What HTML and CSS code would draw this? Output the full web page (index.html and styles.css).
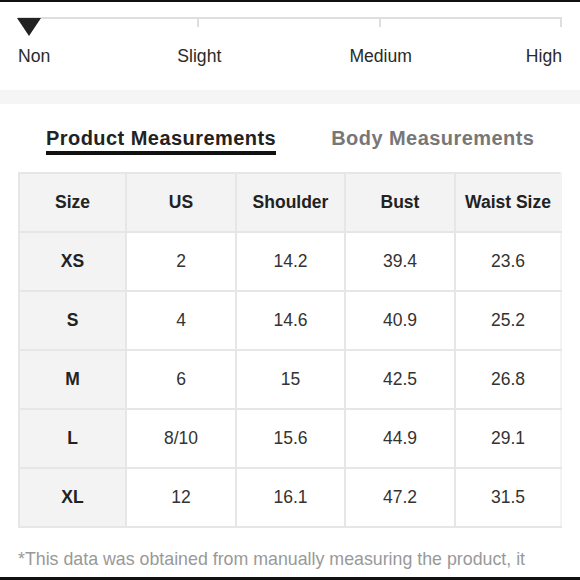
FILE: index.html
```html
<!DOCTYPE html>
<html>
<head>
<meta charset="utf-8">
<link rel="stylesheet" href="styles.css">
</head>
<body>
<section class="stretch">
  <div class="track">
    <span class="seg"></span><span class="seg"></span><span class="seg"></span>
    <span class="pointer"></span>
  </div>
  <div class="labels">
    <span class="lab lab-non">Non</span>
    <span class="lab lab-slight">Slight</span>
    <span class="lab lab-medium">Medium</span>
    <span class="lab lab-high">High</span>
  </div>
</section>
<div class="band"></div>
<nav class="tabs">
  <span class="tab active">Product Measurements</span>
  <span class="tab">Body Measurements</span>
</nav>
<table class="sizes">
  <colgroup>
    <col class="c-size"><col class="c-us"><col class="c-shoulder"><col class="c-bust"><col class="c-waist">
  </colgroup>
  <thead>
    <tr><th>Size</th><th>US</th><th>Shoulder</th><th>Bust</th><th>Waist Size</th></tr>
  </thead>
  <tbody>
    <tr><th>XS</th><td>2</td><td>14.2</td><td>39.4</td><td>23.6</td></tr>
    <tr><th>S</th><td>4</td><td>14.6</td><td>40.9</td><td>25.2</td></tr>
    <tr><th>M</th><td>6</td><td>15</td><td>42.5</td><td>26.8</td></tr>
    <tr><th>L</th><td>8/10</td><td>15.6</td><td>44.9</td><td>29.1</td></tr>
    <tr><th>XL</th><td>12</td><td>16.1</td><td>47.2</td><td>31.5</td></tr>
  </tbody>
</table>
<p class="note">*This data was obtained from manually measuring the product, it</p>
</body>
</html>
```
FILE: styles.css
```css
html, body {
  margin: 0;
  padding: 0;
}
body {
  width: 580px;
  height: 580px;
  box-sizing: border-box;
  overflow: hidden;
  background: #fff;
  border-top: 2px solid #111;
  border-bottom: 3px solid #111;
  font-family: "Liberation Sans", Arial, sans-serif;
  color: #333;
}
.stretch {
  padding: 15px 18px 0 18px;
}
.track {
  position: relative;
  display: grid;
  grid-template-columns: 1fr 1fr 1fr;
  height: 10px;
}
.seg {
  border-top: 2px solid #dedede;
  border-right: 2px solid #dedede;
}
.pointer {
  position: absolute;
  left: -1px;
  top: 1px;
  width: 0;
  height: 0;
  border-left: 12px solid transparent;
  border-right: 12px solid transparent;
  border-top: 18px solid #222;
}
.labels {
  display: grid;
  grid-template-columns: repeat(6, 1fr);
  margin-top: 19px;
  font-size: 17.6px;
  line-height: 20px;
  color: #2a2a2a;
}
.lab { white-space: nowrap; }
.lab-non { grid-column: 1; text-align: left; }
.lab-slight { grid-column: 2 / 4; text-align: center; }
.lab-medium { grid-column: 4 / 6; text-align: center; }
.lab-high { grid-column: 6; text-align: right; }
.band {
  height: 14px;
  margin-top: 24px;
  background: #f5f5f5;
}
.tabs {
  display: flex;
  gap: 55px;
  padding: 22px 0 0 46px;
}
.tab {
  font-size: 20px;
  line-height: 24px;
  font-weight: bold;
  letter-spacing: 0.45px;
  color: #777;
  padding-bottom: 1px;
  border-bottom: 4px solid transparent;
  white-space: nowrap;
}
.tab.active {
  color: #222;
  border-bottom-color: #111;
}
.sizes {
  margin: 17px 0 0 18px;
  width: 542px;
  border-collapse: collapse;
  table-layout: fixed;
  font-size: 17.5px;
}
.c-size { width: 107px; }
.c-us { width: 110px; }
.c-shoulder { width: 109px; }
.c-bust { width: 110px; }
.c-waist { width: 106px; }
.sizes th, .sizes td {
  border: 2px solid #e6e6e6;
  height: 57px;
  padding: 0;
  text-align: center;
  vertical-align: middle;
}
.sizes th {
  background: #f3f3f3;
  color: #222;
  font-weight: bold;
}
.sizes td {
  color: #333;
  background: #fff;
}
.sizes tr > :last-child {
  border-right-color: #f3f3f3;
}
.note {
  margin: 21px 0 0 18px;
  font-size: 17.8px;
  line-height: 20px;
  color: #999;
  white-space: nowrap;
}
```
